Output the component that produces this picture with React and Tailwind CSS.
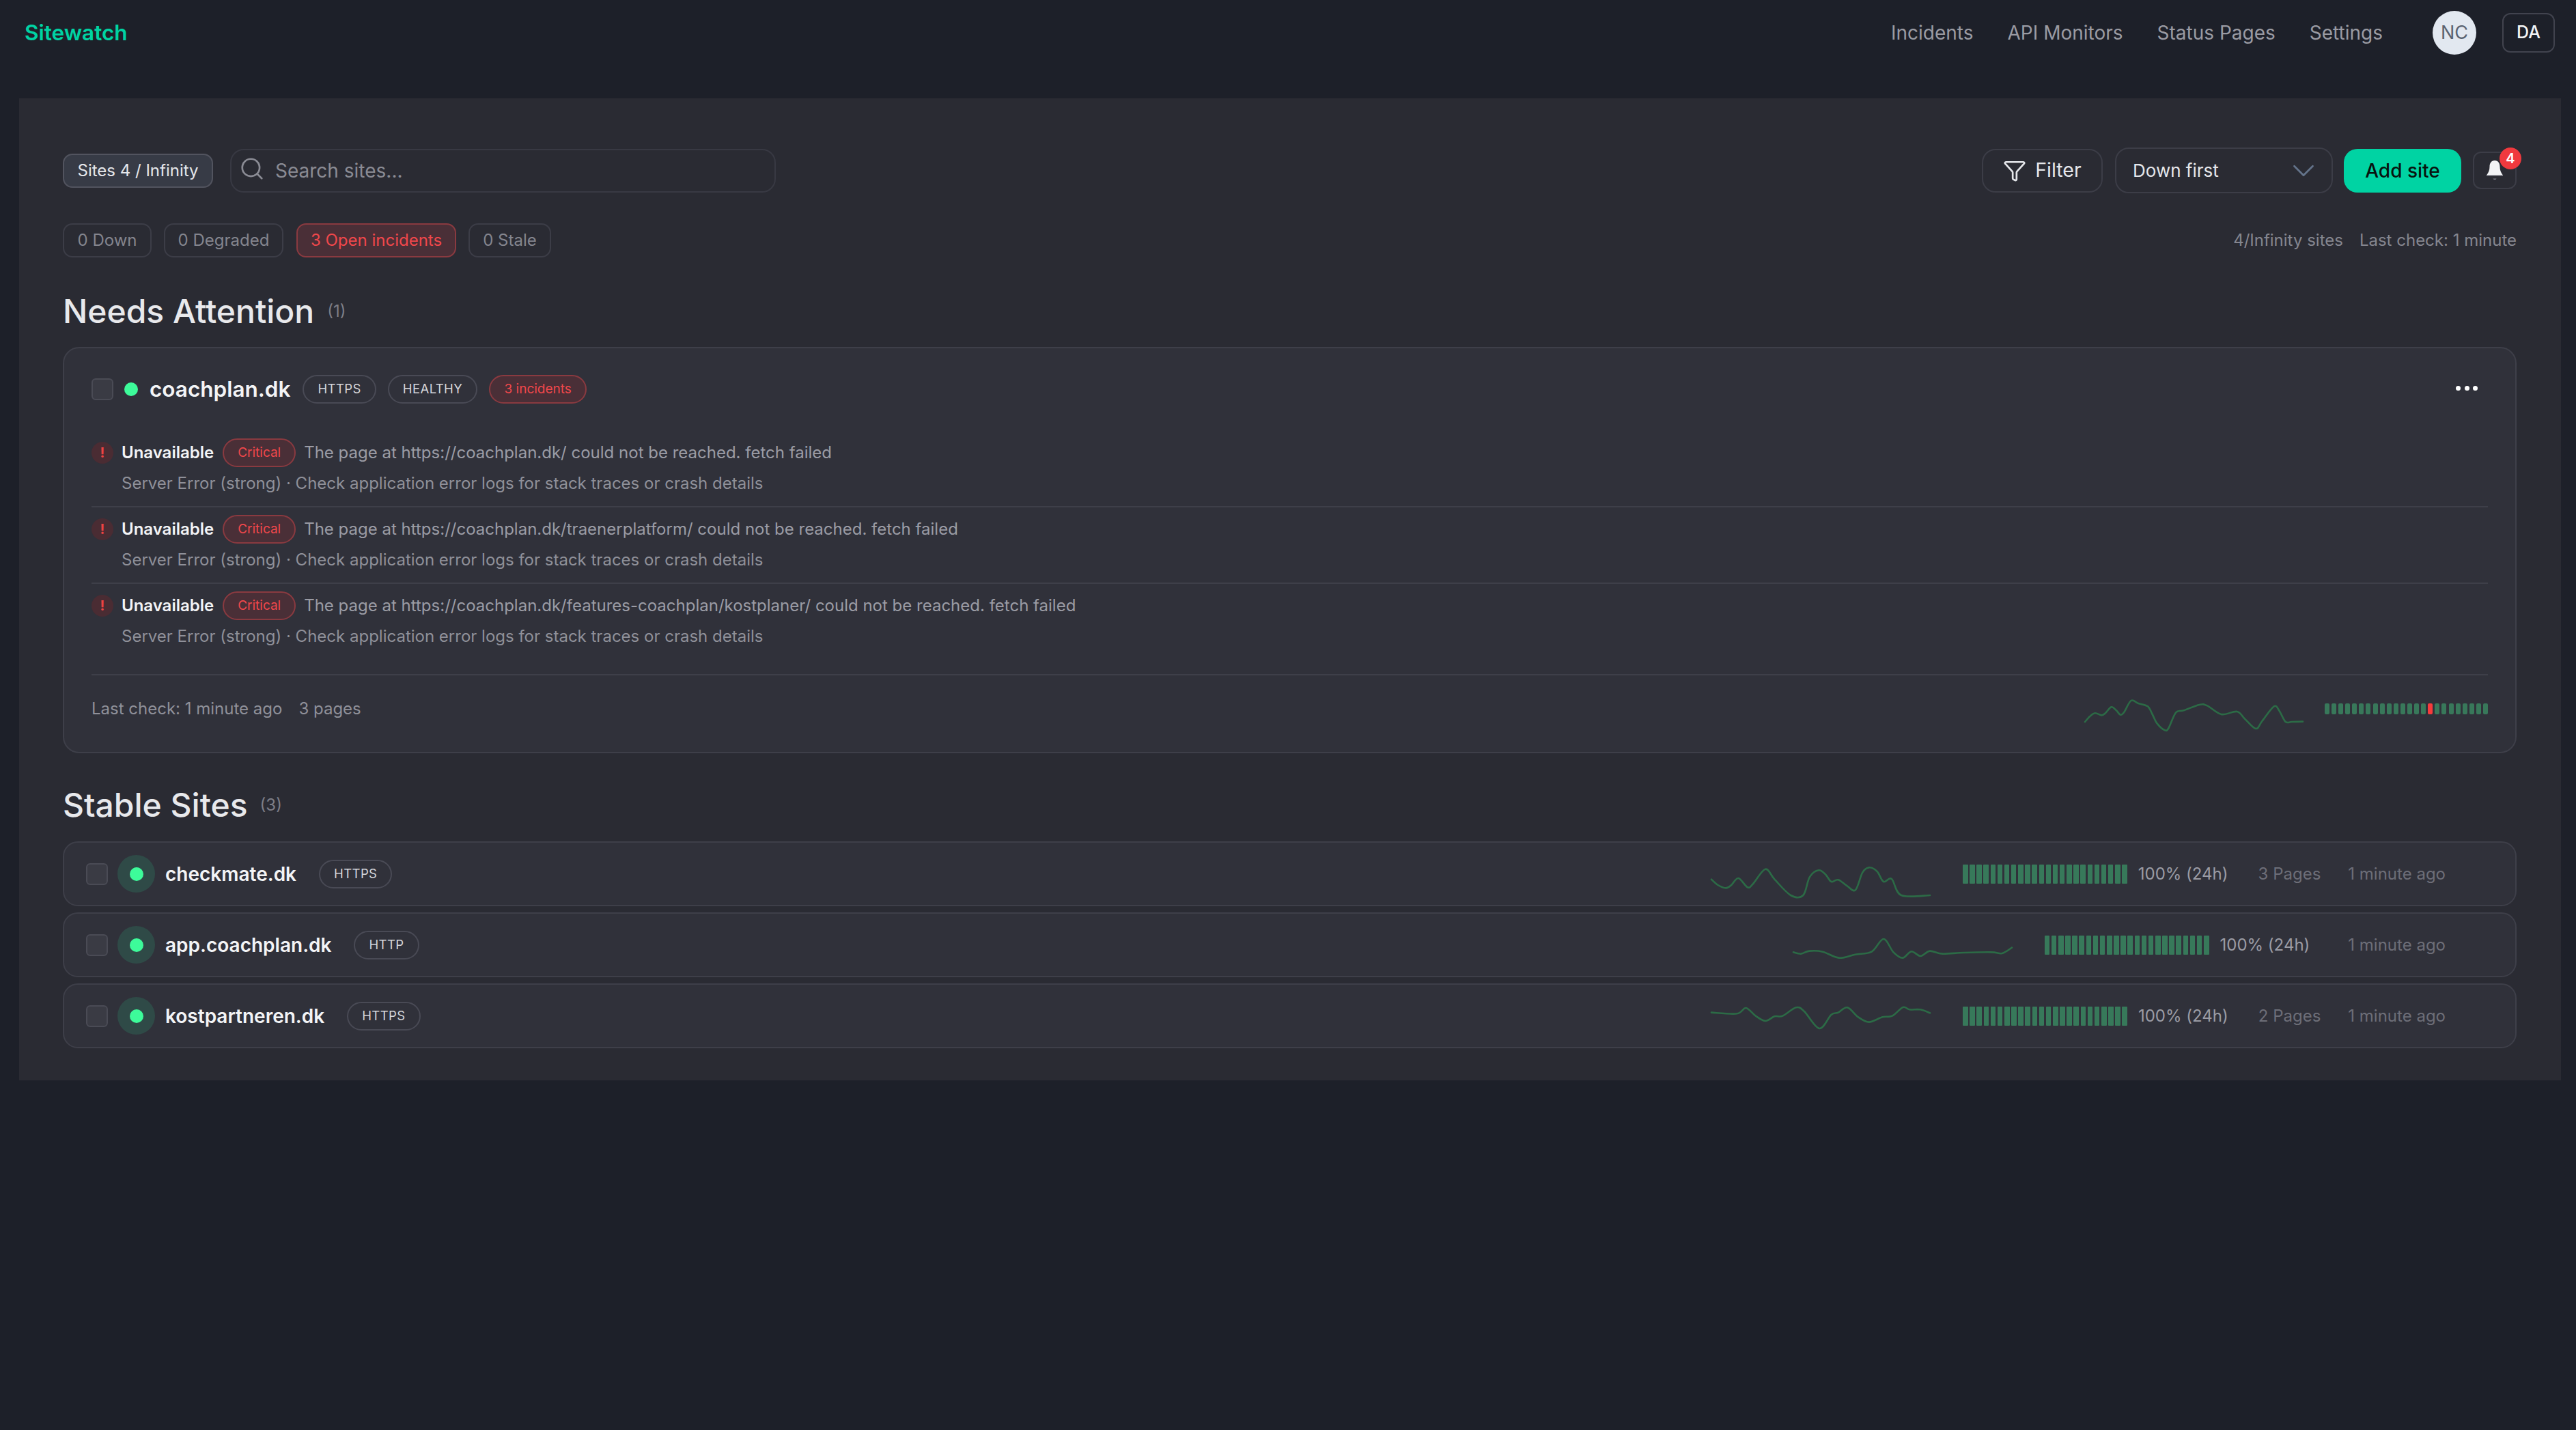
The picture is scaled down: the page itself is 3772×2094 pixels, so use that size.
import React from "react";
import { Search, Filter, ChevronDown } from "lucide-react";

function smooth(pts) {
  let d = `M${pts[0][0]} ${pts[0][1]}`;
  for (let i = 0; i < pts.length - 1; i++) {
    const p0 = pts[i - 1] || pts[i];
    const p1 = pts[i];
    const p2 = pts[i + 1];
    const p3 = pts[i + 2] || p2;
    const c1x = p1[0] + (p2[0] - p0[0]) / 6;
    const c1y = p1[1] + (p2[1] - p0[1]) / 6;
    const c2x = p2[0] - (p3[0] - p1[0]) / 6;
    const c2y = p2[1] - (p3[1] - p1[1]) / 6;
    d += ` C${c1x} ${c1y} ${c2x} ${c2y} ${p2[0]} ${p2[1]}`;
  }
  return d;
}

function Spark({ pts, vb, className }) {
  return (
    <svg viewBox={vb} preserveAspectRatio="none" className={`overflow-visible shrink-0 ${className}`} fill="none">
      <path d={smooth(pts)} stroke="#2c6b46" strokeWidth="2.6" strokeLinejoin="round" strokeLinecap="round" vectorEffect="non-scaling-stroke" />
    </svg>
  );
}

const sparkA = [[115,228],[130,205],[147,190],[168,199],[180,190],[199,163],[215,178],[228,197],[240,185],[262,135],[285,147],[315,160],[330,195],[345,235],[370,265],[382,255],[405,187],[430,178],[480,153],[505,157],[550,195],[600,183],[625,215],[660,258],[680,225],[718,160],[735,180],[755,228],[775,228],[810,227]];
const spark1 = [[33,170],[45,195],[60,208],[70,195],[83,165],[100,205],[110,190],[133,125],[150,170],[180,240],[203,240],[215,160],[232,130],[245,150],[255,180],[268,172],[285,200],[300,217],[313,140],[325,118],[340,135],[352,180],[367,168],[385,240],[438,240]];
const spark2 = [[186,490],[200,497],[215,485],[240,488],[270,515],[300,500],[330,488],[352,432],[370,490],[387,515],[403,487],[420,507],[437,485],[460,497],[500,492],[550,490],[570,495],[588,470]];
const spark3 = [[33,755],[80,760],[97,735],[115,770],[133,792],[150,772],[165,770],[190,733],[205,750],[233,825],[255,765],[268,755],[285,733],[305,775],[325,797],[350,775],[368,770],[388,732],[400,742],[420,742],[438,757]];

const bars = Array.from({ length: 24 }, (_, i) => i);

function Checkbox() {
  return <div className="w-[32px] h-[32px] shrink-0 rounded-[6px] border-2 border-[#4a4b55] bg-[#3a3b44]" />;
}

function Tag({ children }) {
  return (
    <span className="h-[42px] px-[20px] flex items-center rounded-full border-2 border-[#494a55] text-[18.5px] tracking-[0.4px] text-[#d5d6db]">
      {children}
    </span>
  );
}

function RedTag({ children, className }) {
  return (
    <span className={`h-[42px] flex items-center justify-center rounded-full border-2 border-[#8a3a40] bg-[#4a2f37] text-[19px] text-[#f0474b] ${className}`}>
      {children}
    </span>
  );
}

function Issue({ url, border }) {
  return (
    <div className={`pt-[11px] pb-[16px] ${border ? "border-b-2 border-[#3e3f49]" : ""}`}>
      <div className="flex items-center h-[42px]">
        <span className="w-[32px] h-[32px] shrink-0 rounded-full bg-[#4a2c33] flex items-center justify-center text-[20px] font-bold text-[#ef4444]">!</span>
        <span className="ml-[12px] text-[24px] font-semibold text-[#f3f4f6]">Unavailable</span>
        <RedTag className="ml-[13px] w-[107px]">Critical</RedTag>
        <span className="ml-[12px] text-[24px] text-[#9b9ca5]">The page at {url} could not be reached. fetch failed</span>
      </div>
      <div className="mt-[7px] h-[34px] pl-[44px] flex items-center text-[24px] text-[#8f9099]">
        Server Error (strong) · Check application error logs for stack traces or crash details
      </div>
    </div>
  );
}

function Stable({ name, proto, pts, vb, pages }) {
  return (
    <div className="h-[95px] rounded-[22px] border-2 border-[#3e3f49] bg-[#30313a] pl-[32px] pr-[102px] flex items-center">
      <Checkbox />
      <div className="ml-[14px] w-[55px] h-[55px] rounded-full bg-[#2f4a47] flex items-center justify-center shrink-0">
        <div className="w-[20px] h-[20px] rounded-full bg-[#3dfb9a]" />
      </div>
      <span className="ml-[15px] text-[28px] font-semibold text-[#f3f4f6]">{name}</span>
      <span className="ml-[33px]"><Tag>{proto}</Tag></span>
      <div className="ml-auto flex items-center">
        <Spark pts={pts} vb={vb} className="w-[320px] h-[48px]" />
        <div className="ml-[48px] flex gap-[2.65px]">
          {bars.map((i) => (
            <div key={i} className="w-[7.5px] h-[28px] rounded-[1px] bg-[#37795a]" />
          ))}
        </div>
        <span className="ml-[16px] text-[24px] text-[#9b9ca5]">100% (24h)</span>
        {pages && <span className="ml-[44px] text-[24px] text-[#6d6e78]">{pages}</span>}
        <span className={`${pages ? "ml-[40px]" : "ml-[56px]"} text-[24px] text-[#6d6e78]`}>1 minute ago</span>
      </div>
    </div>
  );
}

function Count({ children, className }) {
  return (
    <span className={`h-[50px] flex items-center justify-center rounded-[14px] border-2 border-[#3c3d47] text-[24px] text-[#84858e] ${className}`}>
      {children}
    </span>
  );
}

export default function App() {
  return (
    <div className="min-h-screen bg-[#1d2029] font-['Inter',sans-serif]">
      <header className="h-[144px] pl-[36px] pr-[31px] pb-[48px] flex items-center">
        <span className="text-[31.5px] font-semibold text-[#00d3a3]">Sitewatch</span>
        <nav className="ml-auto flex items-center text-[28px] text-[#9a9ba3]">
          <span>Incidents</span>
          <span className="ml-[50px]">API Monitors</span>
          <span className="ml-[50px]">Status Pages</span>
          <span className="ml-[50px]">Settings</span>
        </nav>
        <div className="ml-[73px] w-[64px] h-[64px] rounded-full bg-[#e2e8f0] flex items-center justify-center text-[27px] text-[#5b6472]">NC</div>
        <div className="ml-[38px] w-[77px] h-[58px] rounded-[12px] border-2 border-[#41434e] flex items-center justify-center text-[25px] font-medium text-[#f3f4f6]">DA</div>
      </header>

      <main className="ml-[28px] mr-[22px] bg-[#2a2b33] pl-[64px] pr-[65px] pt-[72px] pb-[47px]">
        <div className="h-[67px] flex items-center">
          <span className="w-[220px] h-[50px] rounded-[14px] border-2 border-[#52545f] bg-[#373b46] flex items-center justify-center text-[24px] text-[#e5e7eb]">Sites 4 / Infinity</span>
          <div className="ml-[25px] w-[799px] h-[64px] rounded-[20px] border-2 border-[#383943] flex items-center pl-[11px] text-[28px] text-[#8a8b94]">
            <Search size={38} strokeWidth={1.7} className="text-[#8a8b94] -translate-y-[3px]" />
            <span className="ml-[15px]">Search sites...</span>
          </div>
          <div className="ml-auto w-[177px] h-[64px] rounded-[20px] border-2 border-[#3c3d47] flex items-center justify-center text-[28.5px] text-[#e5e7eb]">
            <Filter size={34} strokeWidth={1.9} />
            <span className="ml-[13px]">Filter</span>
          </div>
          <div className="ml-[18px] w-[319px] h-[67px] rounded-[20px] border-2 border-[#3c3d47] flex items-center pl-[24px] pr-[14px] text-[26px] text-[#e5e7eb]">
            <span>Down first</span>
            <ChevronDown size={54} strokeWidth={1.2} className="ml-auto text-[#64748b]" />
          </div>
          <div className="ml-[16px] w-[172px] h-[64px] rounded-[20px] bg-[#00d3a3] flex items-center justify-center text-[28px] font-medium text-[#08130f]">Add site</div>
          <div className="relative ml-[17px] w-[64px] h-[55px] rounded-[12px] border-2 border-[#3c3d47] flex items-center justify-center">
            <svg viewBox="0 0 26 31" className="w-[26px] h-[31px]" fill="none">
              <path d="M13 1C8 1 5.5 5 5.5 10C5.5 15 4 19 1 22.5H25C22 19 20.5 15 20.5 10C20.5 5 18 1 13 1Z" fill="#f3f4f6" />
              <path d="M1 23H25" stroke="#8f9099" strokeWidth="1.5" />
              <path d="M10.5 27.5C11.5 29.5 14.5 29.5 15.5 27.5Z" fill="#7d7e87" />
            </svg>
            <span className="absolute -top-[8px] -right-[9px] w-[32px] h-[32px] rounded-full bg-[#f0393e] flex items-center justify-center text-[20px] font-semibold text-white">4</span>
          </div>
        </div>

        <div className="mt-[44px] flex items-center">
          <Count className="w-[130px]">0 Down</Count>
          <Count className="ml-[18px] w-[175px]">0 Degraded</Count>
          <Count className="ml-[19px] w-[234px] !border-[#8a3a40] bg-[#4a2f37] !text-[#f0474b]">3 Open incidents</Count>
          <Count className="ml-[18px] w-[121px]">0 Stale</Count>
          <span className="ml-auto text-[24px] text-[#85868f]">4/Infinity sites</span>
          <span className="ml-[24px] text-[24px] text-[#85868f]">Last check: 1 minute</span>
        </div>

        <div className="mt-[50px] h-[58px] flex items-center">
          <h2 className="text-[48px] font-medium text-[#e8e9ec]">Needs Attention</h2>
          <span className="ml-[19px] text-[24px] text-[#7d7e87]">(1)</span>
        </div>

        <section className="mt-[23px] rounded-[24px] border-2 border-[#3e3f49] bg-[#30313a] p-[40px] pt-[39px] pb-[39px]">
          <div className="h-[42px] flex items-center">
            <Checkbox />
            <div className="ml-[16px] w-[20px] h-[20px] rounded-full bg-[#3dfb9a]" />
            <span className="ml-[17px] text-[31.5px] font-semibold text-[#f3f4f6]">coachplan.dk</span>
            <span className="ml-[18px]"><Tag>HTTPS</Tag></span>
            <span className="ml-[17px]"><Tag>HEALTHY</Tag></span>
            <RedTag className="ml-[17px] w-[143px]">3 incidents</RedTag>
            <div className="ml-auto mr-[15px] flex gap-[5.5px] -translate-y-[2px]">
              <span className="w-[7px] h-[7px] rounded-full bg-white" />
              <span className="w-[7px] h-[7px] rounded-full bg-white" />
              <span className="w-[7px] h-[7px] rounded-full bg-white" />
            </div>
          </div>

          <div className="mt-[40px]">
            <Issue url="https://coachplan.dk/" border />
            <Issue url="https://coachplan.dk/traenerplatform/" border />
            <Issue url="https://coachplan.dk/features-coachplan/kostplaner/" />
          </div>

          <div className="mt-[22px] border-t-2 border-[#3e3f49] pt-[25px] h-[75px] flex items-center text-[24px] text-[#8f9099]">
            <span>Last check: 1 minute ago</span>
            <span className="ml-[24px]">3 pages</span>
            <div className="ml-auto flex items-center">
              <Spark pts={sparkA} vb="115 99 695 144" className="w-[319px] h-[48px]" />
              <div className="ml-[32px] flex gap-[3.1px]">
                {bars.map((i) => (
                  <div key={i} className={`w-[7px] h-[16px] rounded-[2px] ${i === 15 ? "bg-[#f83b3b]" : "bg-[#38785a]"}`} />
                ))}
              </div>
            </div>
          </div>
        </section>

        <div className="mt-[47px] h-[58px] flex items-center">
          <h2 className="text-[48px] font-medium text-[#e8e9ec]">Stable Sites</h2>
          <span className="ml-[18px] text-[24px] text-[#7d7e87]">(3)</span>
        </div>

        <div className="mt-[24px] flex flex-col gap-[9px]">
          <Stable name="checkmate.dk" proto="HTTPS" pts={spark1} vb="33 75 405 144" pages="3 Pages" />
          <Stable name="app.coachplan.dk" proto="HTTP" pts={spark2} vb="186 387 402 144" />
          <Stable name="kostpartneren.dk" proto="HTTPS" pts={spark3} vb="33 699 405 144" pages="2 Pages" />
        </div>
      </main>
    </div>
  );
}
